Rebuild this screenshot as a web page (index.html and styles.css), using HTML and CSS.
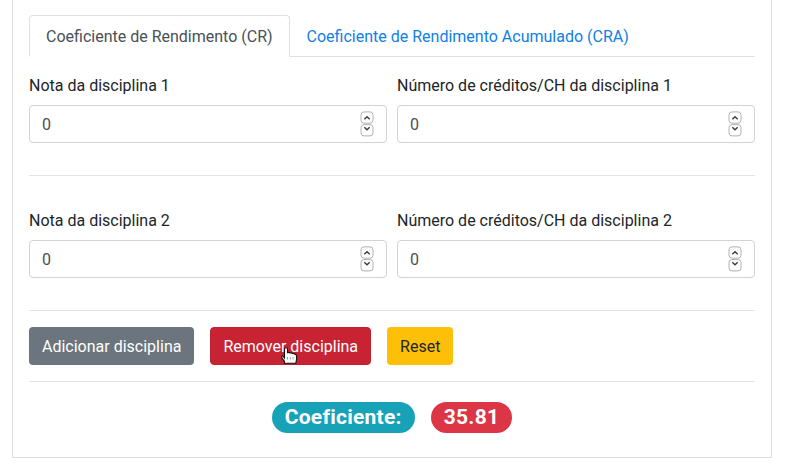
FILE: index.html
```html
<!DOCTYPE html>
<html lang="pt-BR">
<head>
<meta charset="utf-8">
<title>Coeficiente de Rendimento</title>
<link rel="stylesheet" href="styles.css">
</head>
<body>
<svg class="symbols" aria-hidden="true">
  <symbol id="spinner" viewBox="0 0 14 26">
    <g fill="#fdfdfd" stroke="#b2b2b2"><rect x="1" y=".9" width="12" height="11.3" rx="3"/><rect x="1" y="13.6" width="12" height="11.3" rx="3"/></g>
    <path d="M4.3 8.3 7 5.8l2.7 2.5M4.3 16.3 7 18.8l2.7-2.5" fill="none" stroke="#3d3d3d" stroke-width="1.4"/>
  </symbol>
</svg>
<main class="card">
  <nav class="tabs">
    <a class="tab active">Coeficiente de Rendimento (CR)</a>
    <a class="tab">Coeficiente de Rendimento Acumulado (CRA)</a>
  </nav>
  <section class="row">
    <div class="field"><label>Nota da disciplina 1</label><div class="control"><span>0</span><svg class="spinner"><use href="#spinner"/></svg></div></div>
    <div class="field"><label>Número de créditos/CH da disciplina 1</label><div class="control"><span>0</span><svg class="spinner"><use href="#spinner"/></svg></div></div>
  </section>
  <hr>
  <section class="row second">
    <div class="field"><label>Nota da disciplina 2</label><div class="control"><span>0</span><svg class="spinner"><use href="#spinner"/></svg></div></div>
    <div class="field"><label>Número de créditos/CH da disciplina 2</label><div class="control"><span>0</span><svg class="spinner"><use href="#spinner"/></svg></div></div>
  </section>
  <hr>
  <div class="actions">
    <button class="btn secondary">Adicionar disciplina</button>
    <button class="btn danger">Remover disciplina
      <svg class="cursor" viewBox="0 0 17 17"><path d="M3.5 11V2Q3.5.7 5 .7T6.5 2v3.7q1.5-.8 2.8.3 1.5-.5 2.6.6 1.6-.3 2.2.8 1.5.2 1.5 1.6v3.3l-.8 4H3.4v-2L1 11.2Q.2 8.7 2 9z" fill="#fff" stroke="#111" stroke-width="1.1"/><path d="M6.5 10v2.5M9.3 10v2.5M12 10v2.5" stroke="#888" stroke-width=".8"/></svg>
    </button>
    <button class="btn warning">Reset</button>
  </div>
  <hr>
  <div class="result"><span class="badge info">Coeficiente:</span><span class="badge value">35.81</span></div>
</main>
</body>
</html>
```
FILE: styles.css
```css
* { box-sizing: border-box; }
body {
  margin: 0;
  background: #fff;
  color: #212529;
  font: 16px/24px Roboto, sans-serif;
  overflow: hidden;
}
.symbols { display: none; }
.card {
  width: 760px;
  height: 458px;
  margin-left: 12px;
  padding: 15px 16px 0;
  border: 1px solid #dfdfdf;
  border-top: 0;
}
.tabs {
  display: flex;
  height: 42px;
  border-bottom: 1px solid #dee2e6;
}
.tab {
  height: 42px;
  padding: 8px 16px;
  border: 1px solid transparent;
  border-radius: 4px 4px 0 0;
  color: #0f80e8;
  line-height: 26px;
  white-space: nowrap;
}
.tab.active {
  color: #495057;
  background: #fff;
  border-color: #dee2e6 #dee2e6 #fff;
}
.row {
  display: grid;
  grid-template-columns: 1fr 1fr;
  gap: 10px;
  padding: 17px 0 32px;
}
.row.second { padding-top: 33px; }
label { display: block; margin-bottom: 7px; }
.control {
  display: flex;
  align-items: center;
  justify-content: space-between;
  height: 38px;
  padding: 0 12px;
  border: 1px solid #ced4da;
  border-radius: 4px;
  color: #495057;
}
.control span { padding-top: 2px; }
.spinner { width: 14px; height: 26px; }
hr {
  height: 1px;
  margin: 0;
  border: 0;
  background: #e3e3e3;
}
.actions {
  display: flex;
  gap: 16px;
  padding: 16px 0;
}
.btn {
  position: relative;
  height: 38px;
  padding: 2px 12px 0;
  border: 1px solid transparent;
  border-radius: 4px;
  color: #fff;
  font: inherit;
  white-space: nowrap;
}
.secondary { background: #6c757d; }
.danger { background: #c82333; border-color: #bd2130; }
.warning { background: #fdbf07; color: #212529; }
.cursor {
  position: absolute;
  left: 69.5px;
  top: 19px;
  width: 17px;
  height: 17px;
}
.result {
  display: flex;
  justify-content: center;
  gap: 16px;
  padding-top: 20px;
}
.badge {
  height: 31px;
  padding: 5px 13px;
  border-radius: 16px;
  color: #fff;
  font-size: 21px;
  line-height: 21px;
  font-weight: 700;
  letter-spacing: .25px;
}
.info { background: #17a2b8; }
.value { background: #dc3545; }
```
